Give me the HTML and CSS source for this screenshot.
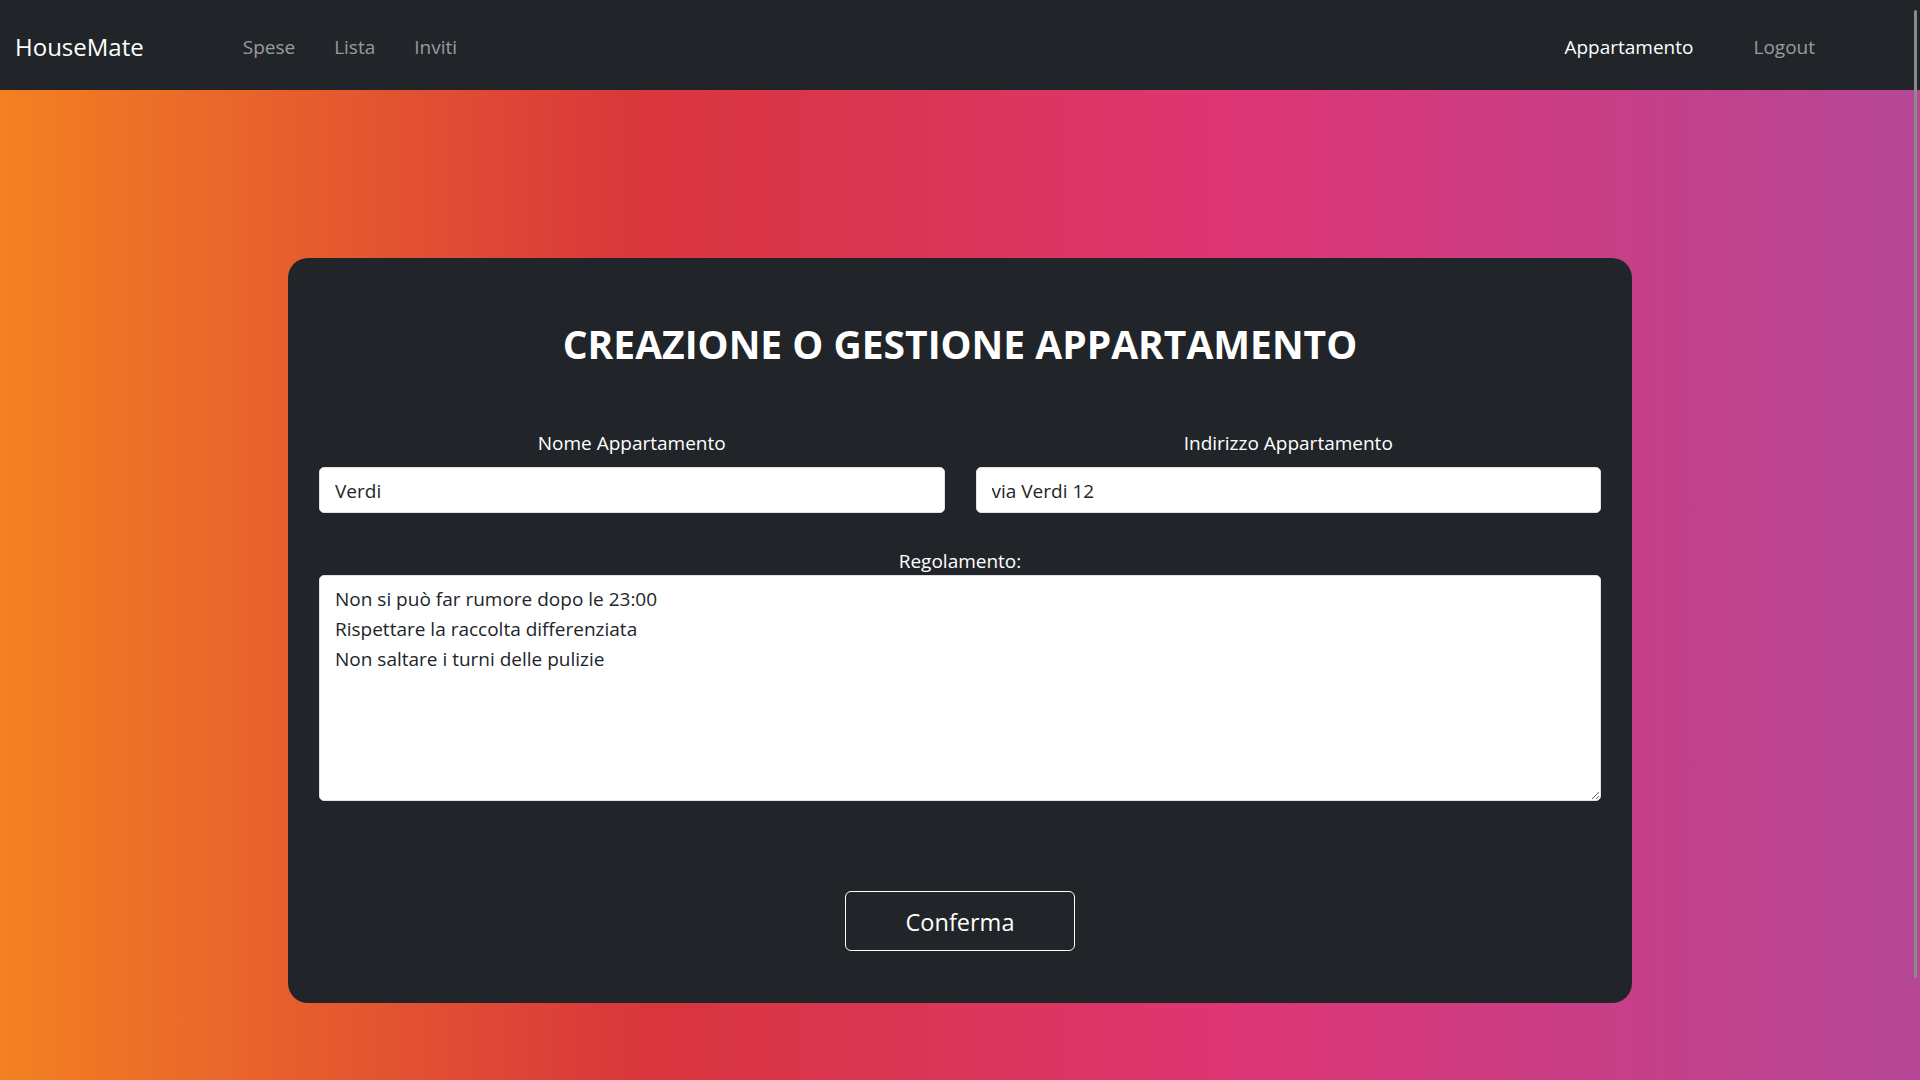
FILE: index.html
```html
<!DOCTYPE html>
<html lang="it">
<head>
<meta charset="utf-8">
<title>HouseMate</title>
<link rel="stylesheet" href="styles.css">
</head>
<body>
<nav class="navbar">
  <a class="brand" href="#">HouseMate</a>
  <ul class="nav-left">
    <li><a class="nav-link" href="#">Spese</a></li>
    <li><a class="nav-link" href="#">Lista</a></li>
    <li><a class="nav-link" href="#">Inviti</a></li>
  </ul>
  <ul class="nav-right">
    <li><a class="nav-link active" href="#">Appartamento</a></li>
    <li><a class="nav-link" href="#">Logout</a></li>
  </ul>
</nav>
<main class="page">
  <form class="card">
    <h1 class="title">CREAZIONE O GESTIONE APPARTAMENTO</h1>
    <div class="row">
      <div class="field">
        <label class="label" for="nome">Nome Appartamento</label>
        <input class="control" id="nome" type="text" value="Verdi">
      </div>
      <div class="field">
        <label class="label" for="indirizzo">Indirizzo Appartamento</label>
        <input class="control" id="indirizzo" type="text" value="via Verdi 12">
      </div>
    </div>
    <div class="field full">
      <label class="label" for="regole">Regolamento:</label>
      <textarea class="control area" id="regole">Non si può far rumore dopo le 23:00
Rispettare la raccolta differenziata
Non saltare i turni delle pulizie</textarea>
    </div>
    <div class="actions">
      <button class="btn" type="button">Conferma</button>
    </div>
  </form>
</main>
<div class="scroll-thumb"></div>
</body>
</html>
```

FILE: styles.css
```css
* { box-sizing: border-box; }
html, body { margin: 0; padding: 0; }
body {
  width: 1920px;
  height: 1080px;
  overflow: hidden;
  font-family: "Segoe UI", "Open Sans", "Noto Sans", sans-serif;
  background: linear-gradient(to right, #f38021 0%, #d8353c 34%, #de3574 64%, #b54796 100%);
  color: #fff;
}
.navbar {
  height: 90px;
  background: #212529;
  display: flex;
  align-items: center;
  padding: 3px 15px 0;
}
.brand {
  font-size: 24px;
  color: #fff;
  text-decoration: none;
  margin-right: 99px;
}
.nav-left, .nav-right {
  list-style: none;
  margin: 0;
  padding: 0;
  display: flex;
  gap: 39px;
}
.nav-right { margin-left: auto; margin-right: 90px; gap: 60px; }
.nav-link {
  font-size: 19px;
  color: rgba(255,255,255,0.55);
  text-decoration: none;
}
.nav-link.active { color: #fff; }
.page {
  display: flex;
  justify-content: center;
  padding-top: 168px;
}
.card {
  width: 1344px;
  background: #212529;
  border-radius: 20px;
  padding: 62px 31px 52px;
  display: flex;
  flex-direction: column;
}
.title {
  margin: 0 0 60px;
  font-size: 39px;
  font-weight: 700;
  line-height: 48px;
  text-align: center;
}
.row {
  display: flex;
  gap: 31px;
}
.field {
  flex: 1;
  display: flex;
  flex-direction: column;
}
.label {
  font-size: 19px;
  line-height: 30px;
  text-align: center;
  margin-bottom: 9px;
}
.full { margin-top: 33px; }
.full .label { margin-bottom: -1px; }
.control {
  font-family: inherit;
  font-size: 19px;
  line-height: 30px;
  height: 46px;
  padding: 8px 15px 6px;
  border: 1px solid #dee2e6;
  border-radius: 5px;
  color: #212529;
  background: #fff;
  outline: none;
}
.area {
  height: 226px;
  resize: vertical;
  padding: 8px 15px;
}
.actions {
  display: flex;
  justify-content: center;
  margin-top: 90px;
}
.btn {
  width: 230px;
  height: 60px;
  padding-top: 2px;
  font-family: inherit;
  font-size: 23.5px;
  color: #fff;
  background: transparent;
  border: 1px solid #fff;
  border-radius: 6px;
}
.scroll-thumb {
  position: fixed;
  left: 1914px;
  top: 10px;
  width: 3px;
  height: 968px;
  background: #8a8a8a;
  border-radius: 2px;
}
```
